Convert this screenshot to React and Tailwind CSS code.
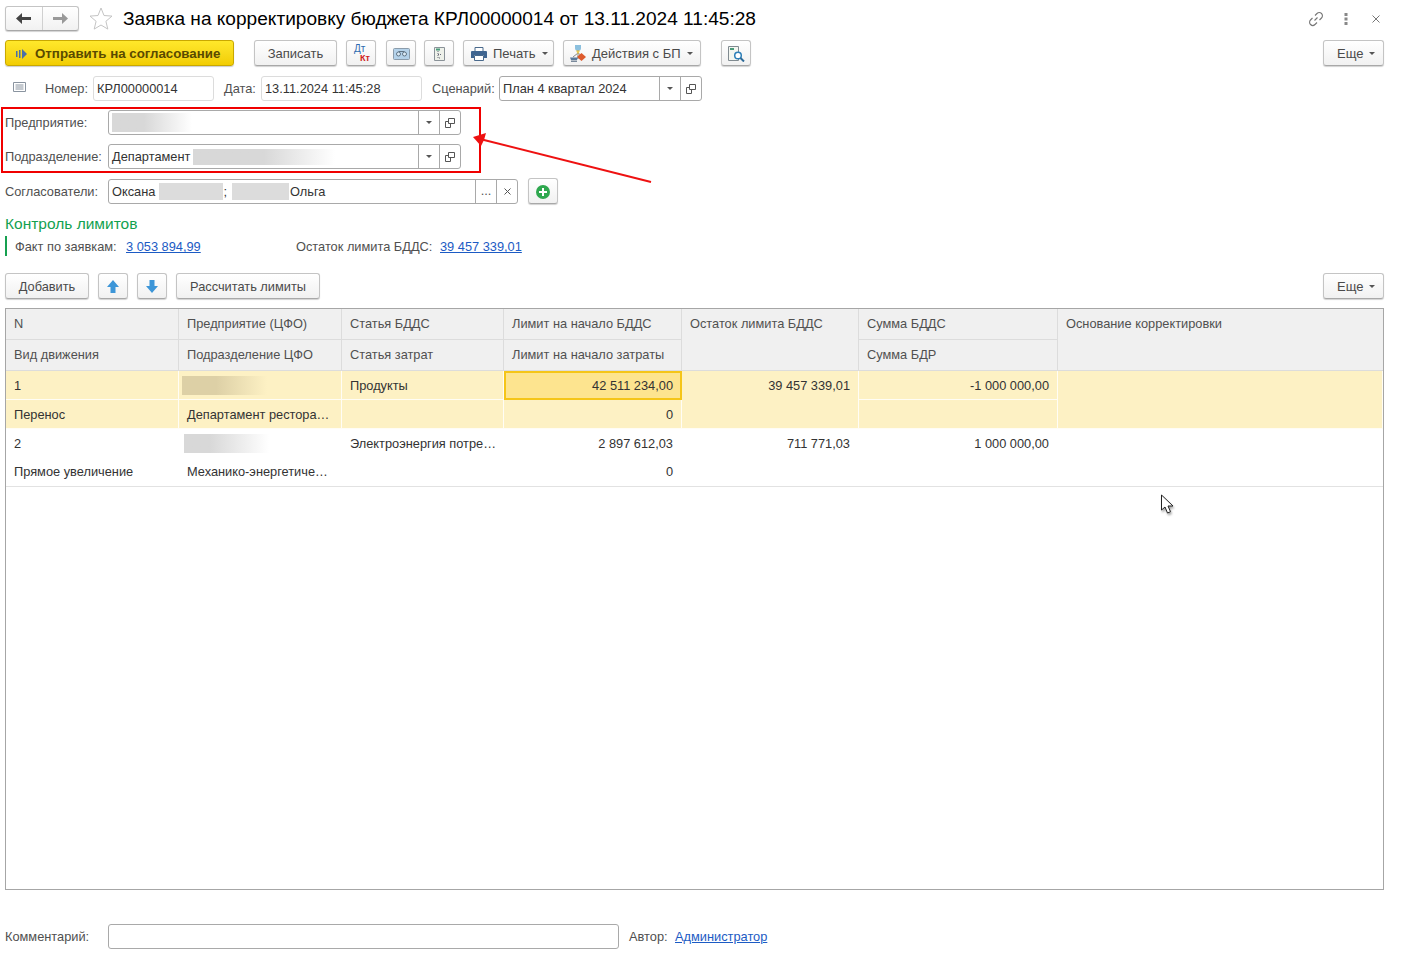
import React from 'react'

const btn = 'flex items-center justify-center h-[26px] pt-px rounded-[3px] border border-[#c4c4c4] border-b-[#a8a8a8] bg-linear-to-b from-white to-[#f1f1f1] shadow-[0_1px_1px_rgba(0,0,0,0.18)] text-[#4a4a4a]'
const field = 'flex items-center h-[25px] rounded-[3px] border border-[#a9a9a9] bg-white text-[#333]'
const label = 'text-[#505050]'
const link = 'text-[#1c5bc4] underline'

function Caret() {
  return <svg width="6" height="3" viewBox="0 0 6 3" className="shrink-0"><path d="M0 0h6L3 3z" fill="#555" /></svg>
}

function OpenIcon() {
  return (
    <svg width="10" height="10" viewBox="0 0 10 10" fill="none" stroke="#555">
      <path d="M3.500 .5h6v5h-6z" />
      <path d="M3.500 3.500h-3v6h5v-4" />
    </svg>
  )
}

function FieldButton({ children, w = 'w-[21px]' }) {
  return <div className={`flex items-center justify-center h-full ${w} border-l border-[#a9a9a9] shrink-0`}>{children}</div>
}

function Blur({ className }) {
  return <div className={`shrink-0 ${className}`} />
}

function SelectField({ className, children }) {
  return (
    <div className={`${field} ${className}`}>
      <div className="flex-1 min-w-0 flex items-center pl-[3px] overflow-hidden">{children}</div>
      <FieldButton><Caret /></FieldButton>
      <FieldButton><OpenIcon /></FieldButton>
    </div>
  )
}

function PrintIcon() {
  return (
    <svg width="16" height="14" viewBox="0 0 16 14" className="shrink-0">
      <path d="M4 .5h8v4H4z" fill="#fff" stroke="#4a6a8c" />
      <path d="M1 4h14a1 1 0 0 1 1 1v6h-3V8H3v3H0V5a1 1 0 0 1 1-1z" fill="#3f6590" />
      <path d="M3.500 8.500h9v5h-9z" fill="#fff" stroke="#4a6a8c" />
    </svg>
  )
}

function FlowIcon() {
  return (
    <svg width="16" height="18" viewBox="0 0 16 18" className="shrink-0">
      <path d="M5 0h6v3a3 3 0 0 1-6 0z" fill="#8cc0de" />
      <path d="M8 5v9M8 8l-5 4M8 8l4 3" stroke="#888" fill="none" />
      <path d="M6 5.500h4l-2 4z" fill="#e8c850" />
      <path d="M11.500 8l4.500 4-4.500 4L7 12z" fill="#dd5a2c" />
      <path d="M0 12.500h8l-1 2.500H1z" fill="#5a7a9c" />
      <path d="M1 15.500h6v1.500H1z" fill="#7a8a9c" />
    </svg>
  )
}

function Header({ className = '', children }) {
  return <div className={`flex items-center px-[8px] bg-[#f0f0f0] border-r border-b border-[#dcdcdc] text-[#505050] truncate ${className}`}>{children}</div>
}

function Cell({ className = '', right, children }) {
  return <div className={`flex items-center px-[8px] whitespace-nowrap overflow-hidden ${right ? 'justify-end' : ''} ${className}`}>{children}</div>
}

function DataRows({ a, b, bg = '', accent, low = 'h-[29px] pt-[2px]' }) {
  const top = 'h-[29px] pt-[2px]'
  return (
    <>
      <Cell className={`${top} ${bg}`}>{a[0]}</Cell>
      <Cell className={`h-[29px] !px-[3px] ${bg}`}>{a[1]}</Cell>
      <Cell className={`${top} ${bg}`}>{a[2]}</Cell>
      <Cell right className={accent ? 'h-[29px] bg-[#fde48f] border-2 border-[#f5c518] !pr-[7px]' : `${top} ${bg}`}>{a[3]}</Cell>
      <Cell right className={`row-span-2 !items-start pt-[5px] ${bg}`}>{a[4]}</Cell>
      <Cell right className={`${top} ${bg}`}>{a[5]}</Cell>
      <Cell className={`row-span-2 ${bg}`} />
      <Cell className={`${low} ${bg}`}>{b[0]}</Cell>
      <Cell className={`${low} ${bg}`}>{b[1]}</Cell>
      <Cell className={`${low} ${bg}`} />
      <Cell right className={`${low} ${bg}`}>{b[2]}</Cell>
      <Cell className={`${low} ${bg}`} />
    </>
  )
}

export default function App() {
  return (
    <div className="relative w-[1402px] h-[957px] overflow-hidden bg-white font-['Liberation_Sans',Arial,sans-serif] text-[12.8px] text-[#333]">
      {/* title */}
      <div className="flex items-center h-[25px] mt-[6px] ml-[5px] mr-[18px]">
        <div className="flex w-[74px] h-[25px] rounded-[3px] border border-[#c4c4c4] border-b-[#a8a8a8] bg-linear-to-b from-white to-[#f1f1f1] shadow-[0_1px_1px_rgba(0,0,0,0.18)]">
          <div className="flex-1 flex items-center justify-center border-r border-[#d0d0d0]">
            <svg width="15" height="11" viewBox="0 0 15 11"><path d="M0 5.500L6 0v4h9v3H6v4z" fill="#444" /></svg>
          </div>
          <div className="flex-1 flex items-center justify-center">
            <svg width="15" height="11" viewBox="0 0 15 11"><path d="M15 5.500L9 0v4H0v3h9v4z" fill="#999" /></svg>
          </div>
        </div>
        <svg width="24" height="23" viewBox="0 0 24 23" className="ml-[10px]" fill="#fff" stroke="#c4c4c4">
          <path d="M12 1l3 7.500 8 .6-6.100 5.200 1.900 7.800L12 18l-6.800 4.100 1.900-7.800L1 9.100l8-.6z" />
        </svg>
        <div className="ml-[10px] -mt-px text-[19.1px] leading-[25px] text-black">Заявка на корректировку бюджета КРЛ00000014 от 13.11.2024 11:45:28</div>
        <div className="flex-1" />
        <svg width="16" height="16" viewBox="0 0 16 16" fill="none" stroke="#777" strokeWidth="1.100" className="mr-[20px]">
          <path d="M6.500 9.500l3-3M7 4.500l2-2a2.800 2.800 0 0 1 4.500 4.500l-2 2M9 11.500l-2 2A2.800 2.800 0 0 1 2.500 9l2-2" />
        </svg>
        <svg width="4" height="12" viewBox="0 0 4 12" fill="#888" className="mr-[24px]">
          <path d="M.5 0h3v3h-3zM.5 4.500h3v3h-3zM.5 9h3v3h-3z" />
        </svg>
        <svg width="8" height="8" viewBox="0 0 8 8" stroke="#777" className="mr-[4px]"><path d="M.5.500l7 7M7.500.500l-7 7" /></svg>
      </div>

      {/* toolbar */}
      <div className="flex items-center h-[26px] mt-[9px] mr-[18px] ml-[5px] text-[13px]">
        <div className="flex items-center w-[229px] h-[26px] pt-px pl-[10px] rounded-[3px] border border-[#c9a800] bg-linear-to-b from-[#ffe82a] to-[#f2cd00] shadow-[0_1px_1px_rgba(0,0,0,0.2)] font-bold text-[13.3px] text-[#5a4a00]">
          <svg width="11" height="10" viewBox="0 0 11 10" className="mr-[8px] shrink-0">
            <path d="M0 2h1.500v6H0zM3 1h1.500v8H3z" fill="#4a6fa8" />
            <path d="M6 0l5 5-5 5z" fill="#4a6fa8" />
          </svg>
          Отправить на согласование
        </div>
        <div className={`${btn} w-[83px] ml-[20px]`}>Записать</div>
        <div className={`${btn} w-[30px] ml-[9px] relative`}>
          <span className="absolute left-[7px] top-[3px] text-[10px] leading-[10px] text-[#2f6cb0]">Дт</span>
          <span className="absolute left-[13px] top-[12px] text-[9px] leading-[10px] font-bold text-[#d0201a]">Кт</span>
        </div>
        <div className={`${btn} w-[30px] ml-[10px]`}>
          <svg width="17" height="12" viewBox="0 0 17 12">
            <rect x=".5" y=".5" width="16" height="11" rx="1" fill="#b4d2ea" stroke="#8b9cab" />
            <circle cx="5.500" cy="6" r="2" fill="#dcebf6" stroke="#5f7485" />
            <circle cx="11.500" cy="6" r="2" fill="#dcebf6" stroke="#5f7485" />
            <path d="M5.500 3.500h6" stroke="#5f7485" />
          </svg>
        </div>
        <div className={`${btn} w-[30px] ml-[8px]`}>
          <svg width="11" height="14" viewBox="0 0 11 14" fill="none">
            <path d="M.5.500h10v13H.5z" fill="#eef1ea" stroke="#8a9298" />
            <path d="M2 2.500h4" stroke="#4a9a7a" strokeWidth="2" />
            <path d="M4 4v7h3M4 7.500h3" stroke="#667" strokeDasharray="1 1" />
          </svg>
        </div>
        <div className={`${btn} !justify-start pl-[7px] w-[91px] ml-[9px] gap-[6px]`}>
          <PrintIcon />
          <span>Печать</span>
          <Caret />
        </div>
        <div className={`${btn} !justify-start pl-[6px] w-[138px] ml-[9px] gap-[6px]`}>
          <FlowIcon />
          <span>Действия с БП</span>
          <Caret />
        </div>
        <div className={`${btn} w-[30px] ml-[20px]`}>
          <svg width="17" height="16" viewBox="0 0 17 16" fill="none">
            <path d="M.5.500h10v14H.5z" fill="#f4f6f0" stroke="#808a90" />
            <path d="M2 3h4" stroke="#4a9a7a" strokeWidth="2" />
            <circle cx="10" cy="9.500" r="3.300" fill="#fff" stroke="#2d7fb8" strokeWidth="1.500" />
            <path d="M12.500 12l3.500 3.500" stroke="#2d6a98" strokeWidth="2" />
          </svg>
        </div>
        <div className="flex-1" />
        <div className={`${btn} !justify-start pl-[13px] w-[61px] gap-[6px]`}>
          <span>Еще</span>
          <Caret />
        </div>
      </div>

      {/* number, date, scenario */}
      <div className="flex items-center h-[25px] mt-[10px] ml-[13px]">
        <svg width="13" height="10" viewBox="0 0 13 10" fill="none" stroke="#8a94a0" className="mb-[4px] mr-[19px]">
          <path d="M.5.500h12v9H.5zM2.500 3h8M2.500 5h8M2.500 7h8" />
        </svg>
        <span className={`${label} w-[48px]`}>Номер:</span>
        <div className="flex items-center w-[121px] h-[25px] pl-[3px] rounded-[3px] border border-[#dcdcdc]">КРЛ00000014</div>
        <span className={`${label} ml-[10px] w-[37px]`}>Дата:</span>
        <div className="flex items-center w-[161px] h-[25px] pl-[3px] rounded-[3px] border border-[#dcdcdc]">13.11.2024 11:45:28</div>
        <span className={`${label} ml-[10px] w-[67px]`}>Сценарий:</span>
        <SelectField className="w-[203px]">План 4 квартал 2024</SelectField>
      </div>

      {/* company, department */}
      <div className="flex items-center h-[25px] mt-[9px] ml-[5px]">
        <span className={`${label} w-[103px]`}>Предприятие:</span>
        <SelectField className="w-[353px]"><Blur className="w-[80px] h-[19px] bg-linear-to-r from-[#d8d8d8] from-40% to-white" /></SelectField>
      </div>
      <div className="flex items-center h-[25px] mt-[9px] ml-[5px]">
        <span className={`${label} w-[103px]`}>Подразделение:</span>
        <SelectField className="w-[353px]">
          Департамент
          <Blur className="w-[142px] h-[16px] ml-[3px] bg-linear-to-r from-[#d8d8d8] from-50% to-white" />
        </SelectField>
      </div>

      {/* approvers */}
      <div className="flex items-center h-[26px] mt-[9px] ml-[5px]">
        <span className={`${label} w-[103px] mt-px`}>Согласователи:</span>
        <div className={`${field} w-[410px] self-end`}>
          <div className="flex-1 flex items-center pl-[3px]">
            Оксана
            <Blur className="w-[64px] h-[17px] ml-[4px] bg-[#dcdcdc]" />
            ;
            <Blur className="w-[57px] h-[17px] ml-[5px] bg-[#dcdcdc]" />
            <span className="ml-px">Ольга</span>
          </div>
          <FieldButton><span className="text-[#555] leading-none">...</span></FieldButton>
          <FieldButton>
            <svg width="7" height="7" viewBox="0 0 7 7" stroke="#555"><path d="M.5.500l6 6M6.500.500l-6 6" /></svg>
          </FieldButton>
        </div>
        <div className={`${btn} w-[30px] ml-[10px]`}>
          <svg width="14" height="14" viewBox="0 0 14 14">
            <circle cx="7" cy="7" r="7" fill="#2fa84f" />
            <path d="M6 3h2v3h3v2H8v3H6V8H3V6h3z" fill="#fff" />
          </svg>
        </div>
      </div>

      {/* limits */}
      <div className="ml-[5px] mt-[10px] text-[15.5px] leading-[20px] text-[#12a150]">Контроль лимитов</div>
      <div className="flex items-center h-[20px] mt-[2px] pt-[2px] ml-[5px] border-l-2 border-[#16a050] pl-[8px]">
        <span className={`${label} w-[111px]`}>Факт по заявкам:</span>
        <span className={`${link} w-[170px]`}>3 053 894,99</span>
        <span className={`${label} w-[144px]`}>Остаток лимита БДДС:</span>
        <span className={link}>39 457 339,01</span>
      </div>

      {/* table buttons */}
      <div className="flex items-center h-[26px] mt-[17px] ml-[5px] mr-[18px]">
        <div className={`${btn} w-[84px]`}>Добавить</div>
        <div className={`${btn} w-[30px] ml-[9px]`}>
          <svg width="12" height="13" viewBox="0 0 12 13"><path d="M6 0l6 7H8.500v6h-5V7H0z" fill="#3d96d8" /></svg>
        </div>
        <div className={`${btn} w-[30px] ml-[9px]`}>
          <svg width="12" height="13" viewBox="0 0 12 13"><path d="M6 13L0 6h3.500V0h5v6H12z" fill="#3d96d8" /></svg>
        </div>
        <div className={`${btn} w-[144px] ml-[9px]`}>Рассчитать лимиты</div>
        <div className="flex-1" />
        <div className={`${btn} !justify-start pl-[13px] w-[61px] gap-[6px] text-[13px]`}>
          <span>Еще</span>
          <Caret />
        </div>
      </div>

      {/* table */}
      <div className="mt-[9px] ml-[5px] w-[1379px] h-[582px] border border-[#a6a6a6]">
        <div className="grid grid-cols-[173px_163px_162px_178px_177px_199px_1fr]">
          <Header className="h-[31px]">N</Header>
          <Header className="h-[31px]">Предприятие (ЦФО)</Header>
          <Header className="h-[31px]">Статья БДДС</Header>
          <Header className="h-[31px]">Лимит на начало БДДС</Header>
          <Header className="row-span-2 !items-start pt-[5px]">Остаток лимита БДДС</Header>
          <Header className="h-[31px]">Сумма БДДС</Header>
          <Header className="row-span-2 !items-start pt-[5px] border-r-0">Основание корректировки</Header>
          <Header className="h-[31px]">Вид движения</Header>
          <Header className="h-[31px]">Подразделение ЦФО</Header>
          <Header className="h-[31px]">Статья затрат</Header>
          <Header className="h-[31px]">Лимит на начало затраты</Header>
          <Header className="h-[31px]">Сумма БДР</Header>

          <DataRows
            bg="bg-[#fdf1c4] border-r border-b border-[#fffdf5]"
            accent
            a={['1', <Blur className="w-[85px] h-[19px] bg-linear-to-r from-[#ddd0a6] from-40% to-[#fdf1c4]" />, 'Продукты', '42 511 234,00', '39 457 339,01', '-1 000 000,00']}
            b={['Перенос', 'Департамент рестора…', '0']}
          />
          <DataRows
            bg="border-r border-b border-transparent"
            low="h-[28px] pt-[1px]"
            a={['2', <Blur className="w-[85px] h-[19px] ml-[2px] bg-linear-to-r from-[#d8d8d8] from-30% to-white" />, 'Электроэнергия потре…', '2 897 612,03', '711 771,03', '1 000 000,00']}
            b={['Прямое увеличение', 'Механико-энергетиче…', '0']}
          />
        </div>
        <div className="h-px bg-[#e2e2e2]" />
      </div>

      {/* comment */}
      <div className="flex items-center h-[25px] mt-[34px] ml-[5px]">
        <span className={`${label} w-[103px]`}>Комментарий:</span>
        <div className={`${field} w-[511px]`} />
        <span className={`${label} ml-[10px] w-[46px]`}>Автор:</span>
        <span className={link}>Администратор</span>
      </div>

      {/* annotation over the form */}
      <div className="absolute left-[1px] top-[107px] w-[480px] h-[66px] border-2 border-[#f00000]" />
      <svg className="absolute left-[470px] top-[130px]" width="185" height="55" viewBox="0 0 185 55">
        <path d="M181 52L10 9" stroke="#ee1111" strokeWidth="2" fill="none" />
        <path d="M3 7l13-4-2 7-3 6z" fill="#ee1111" />
      </svg>

      {/* mouse cursor */}
      <svg className="absolute left-[1160px] top-[494px] drop-shadow-[1px_2px_1px_rgba(0,0,0,0.35)]" width="16" height="22" viewBox="0 0 16 22">
        <path d="M1.500 1v15l3.500-3 2.500 6 3-1.300-2.500-5.700H13z" fill="#fff" stroke="#222" />
      </svg>
    </div>
  )
}
